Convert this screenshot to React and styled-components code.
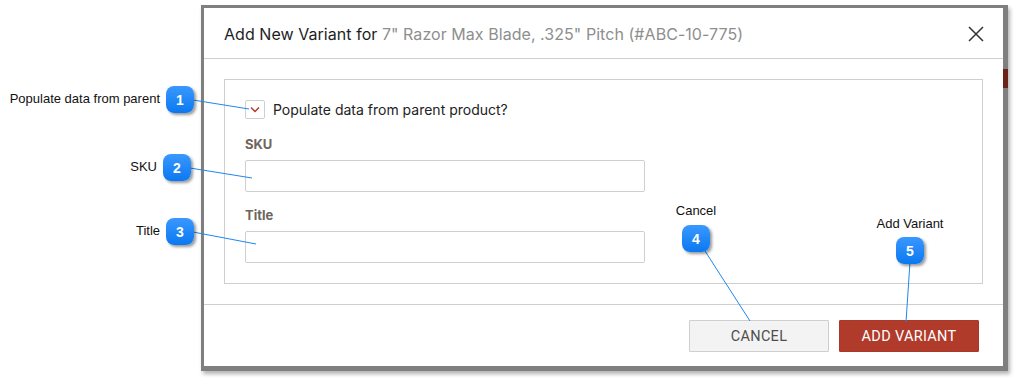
import React from "react";
import styled, { createGlobalStyle } from "styled-components";

const Global = createGlobalStyle`
  html, body { margin: 0; padding: 0; background: #ffffff; }
  body { font-family: Inter, "Noto Sans", sans-serif; }
  * { box-sizing: border-box; }
`;

const Page = styled.div`
  position: relative;
  width: 1017px;
  height: 381px;
  padding: 5px 0 0 201px;
  overflow: hidden;
`;

const Frame = styled.div`
  position: relative;
  width: 807px;
  height: 366px;
  background: #7f7f7f;
  padding: 3px 5px 5px 3px;
  box-shadow: 2px 3px 4px rgba(0, 0, 0, 0.3);
`;

const BackdropPatch = styled.div`
  position: absolute;
  right: 0;
  top: ${(p) => p.$top}px;
  width: 5px;
  height: ${(p) => p.$h}px;
  background: ${(p) => p.$color};
`;

const Modal = styled.div`
  width: 799px;
  height: 358px;
  background: #ffffff;
  display: flex;
  flex-direction: column;
`;

const Header = styled.div`
  height: 51px;
  flex: none;
  border-bottom: 1px solid #cfcfcf;
  display: flex;
  align-items: center;
  justify-content: space-between;
  padding: 2px 17px 0 20px;
`;

const Title = styled.h2`
  margin: 0;
  font-family: Inter, sans-serif;
  font-size: 16px;
  font-weight: 400;
  color: #1e1e1e;
  letter-spacing: 0.05px;
`;

const Muted = styled.span`
  color: #8e8e8e;
`;

const CloseButton = styled.button`
  border: 0;
  background: none;
  padding: 0;
  width: 20px;
  height: 20px;
  display: flex;
  align-items: center;
  justify-content: center;
  cursor: pointer;
`;

const Body = styled.div`
  flex: 1;
  padding: 20px;
`;

const FormBox = styled.div`
  border: 1px solid #cfcfcf;
  height: 205px;
  padding: 20px 20px 0 20px;
  display: flex;
  flex-direction: column;
`;

const CheckRow = styled.label`
  display: flex;
  align-items: center;
  gap: 8px;
  font-family: Inter, sans-serif;
  font-size: 14px;
  color: #222;
  height: 19px;
`;

const CheckBox = styled.span`
  width: 20px;
  height: 19px;
  border: 1px solid #cfcfcf;
  border-radius: 2px;
  display: flex;
  align-items: center;
  justify-content: center;
  background: #fff;
`;

const FieldLabel = styled.div`
  font-family: Inter, sans-serif;
  font-size: 13px;
  font-weight: 700;
  color: #6d6560;
  margin-top: ${(p) => p.$mt}px;
  height: 16px;
  line-height: 16px;
`;

const Input = styled.input`
  width: 400px;
  height: 32px;
  border: 1px solid #cfcfcf;
  border-radius: 2px;
  margin-top: 8px;
  padding: 0 8px;
  font-family: Inter, sans-serif;
  font-size: 14px;
  outline: none;
`;

const Footer = styled.div`
  height: 62px;
  flex: none;
  border-top: 1px solid #cfcfcf;
  display: flex;
  justify-content: flex-end;
  align-items: flex-start;
  gap: 10px;
  padding: 15px 24px 0 0;
`;

const Button = styled.button`
  width: 140px;
  height: 32px;
  font-family: Roboto, Inter, sans-serif;
  font-size: 14.5px;
  letter-spacing: 0.3px;
  text-transform: uppercase;
  border-radius: 1px;
  cursor: pointer;
  border: 1px solid ${(p) => (p.$primary ? "#a9382a" : "#cfcfcf")};
  background: ${(p) => (p.$primary ? "#b03b2b" : "#f4f3f3")};
  color: ${(p) => (p.$primary ? "#ffffff" : "#4e4e4e")};
`;

const Lines = styled.svg`
  position: absolute;
  left: 0;
  top: 0;
  pointer-events: none;
`;

const Badge = styled.div`
  position: absolute;
  left: ${(p) => p.$x}px;
  top: ${(p) => p.$y}px;
  width: 28px;
  height: 27px;
  border-radius: 8px;
  background: linear-gradient(180deg, #3a98ff 0%, #0b78f0 100%);
  box-shadow: 2px 2px 3px rgba(0, 0, 0, 0.4);
  color: #fff;
  font-family: "Liberation Sans", Arial, sans-serif;
  font-weight: 700;
  font-size: 14px;
  display: flex;
  align-items: center;
  justify-content: center;
`;

const Note = styled.div`
  position: absolute;
  top: ${(p) => p.$y}px;
  font-family: "Liberation Sans", Arial, sans-serif;
  font-size: 13px;
  color: #111;
  white-space: nowrap;
  line-height: 15px;
  ${(p) => (p.$right != null ? `right: ${1017 - p.$right}px;` : "")}
  ${(p) => (p.$center != null ? `left: ${p.$center}px; transform: translateX(-50%);` : "")}
`;

const callouts = [
  { n: 1, x: 166, y: 86, line: [193, 100, 249, 109] },
  { n: 2, x: 163, y: 154, line: [190, 168, 252, 178] },
  { n: 3, x: 166, y: 218, line: [193, 232, 256, 244] },
  { n: 4, x: 682, y: 225, line: [705, 251, 750, 321] },
  { n: 5, x: 896, y: 237, line: [910, 262, 906, 322] },
];

export default function App() {
  return (
    <>
      <Global />
      <Page>
        <Frame>
          <BackdropPatch $top={64} $h={19} $color="#6b2219" />
          <Modal>
            <Header>
              <Title>
                Add New Variant for{" "}
                <Muted>7" Razor Max Blade, .325" Pitch (#ABC-10-775)</Muted>
              </Title>
              <CloseButton aria-label="Close">
                <svg width="16" height="16" viewBox="0 0 16 16">
                  <path d="M1 1 L15 15 M15 1 L1 15" stroke="#333" strokeWidth="1.5" fill="none" />
                </svg>
              </CloseButton>
            </Header>
            <Body>
              <FormBox>
                <CheckRow>
                  <CheckBox>
                    <svg width="10" height="7" viewBox="0 0 10 7">
                      <path d="M1 1.5 L5 5.5 L9 1.5" stroke="#b03b2b" strokeWidth="1.5" fill="none" />
                    </svg>
                  </CheckBox>
                  Populate data from parent product?
                </CheckRow>
                <FieldLabel $mt={17}>SKU</FieldLabel>
                <Input />
                <FieldLabel $mt={15}>Title</FieldLabel>
                <Input />
              </FormBox>
            </Body>
            <Footer>
              <Button>Cancel</Button>
              <Button $primary>Add Variant</Button>
            </Footer>
          </Modal>
        </Frame>

        <Lines width="1017" height="381">
          {callouts.map((c) => (
            <line
              key={c.n}
              x1={c.line[0]}
              y1={c.line[1]}
              x2={c.line[2]}
              y2={c.line[3]}
              stroke="#1f86f2"
              strokeWidth="1"
            />
          ))}
        </Lines>

        {callouts.map((c) => (
          <Badge key={c.n} $x={c.x} $y={c.y}>
            {c.n}
          </Badge>
        ))}

        <Note $right={160} $y={91}>Populate data from parent</Note>
        <Note $right={157} $y={159}>SKU</Note>
        <Note $right={160} $y={223}>Title</Note>
        <Note $center={696} $y={203}>Cancel</Note>
        <Note $center={910} $y={216}>Add Variant</Note>
      </Page>
    </>
  );
}
